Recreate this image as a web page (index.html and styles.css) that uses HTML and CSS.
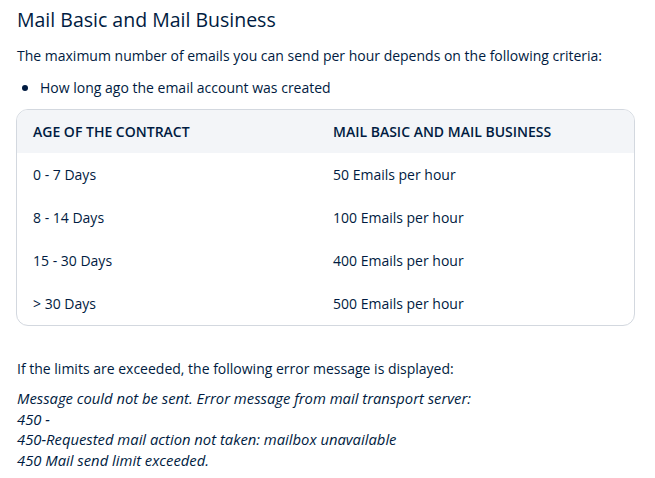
FILE: index.html
```html
<!DOCTYPE html>
<html>
<head>
<meta charset="utf-8">
<link rel="stylesheet" href="styles.css">
</head>
<body>
<div class="page">
  <h2 class="title">Mail Basic and Mail Business</h2>
  <p class="text">The maximum number of emails you can send per hour depends on the following criteria:</p>
  <ul class="list">
    <li>How long ago the email account was created</li>
  </ul>
  <div class="table-wrap">
    <table class="limits">
      <thead>
        <tr><th>AGE OF THE CONTRACT</th><th>MAIL BASIC AND MAIL BUSINESS</th></tr>
      </thead>
      <tbody>
        <tr><td>0 - 7 Days</td><td>50 Emails per hour</td></tr>
        <tr><td>8 - 14 Days</td><td>100 Emails per hour</td></tr>
        <tr><td>15 - 30 Days</td><td>400 Emails per hour</td></tr>
        <tr><td>&gt; 30 Days</td><td>500 Emails per hour</td></tr>
      </tbody>
    </table>
  </div>
  <p class="text after">If the limits are exceeded, the following error message is displayed:</p>
  <p class="error">Message could not be sent. Error message from mail transport server:<br>450 -<br>450-Requested mail action not taken: mailbox unavailable<br>450 Mail send limit exceeded.</p>
</div>
</body>
</html>
```

FILE: styles.css
```css
html, body {
  margin: 0;
  padding: 0;
  background: #ffffff;
}
body {
  font-family: "Open Sans", "Liberation Sans", sans-serif;
  color: #001b41;
}
.page {
  padding: 6px 20px 0 17px;
}
.title {
  margin: 0;
  font-size: 19.5px;
  font-weight: 500;
  line-height: 28px;
}
.text {
  margin: 11px 0 0;
  font-size: 14px;
  line-height: 22px;
}
.list {
  margin: 9px 0 0;
  padding: 0 0 0 23px;
  font-size: 14px;
  line-height: 22px;
}
.list li::marker {
  font-size: 16px;
}
.table-wrap {
  margin-top: 10px;
  border: 1px solid #d3d8df;
  border-radius: 12px;
  overflow: hidden;
  margin-left: -1px;
}
.limits {
  width: 100%;
  border-collapse: collapse;
  font-size: 14px;
}
.limits th {
  background: #f3f5f8;
  text-align: left;
  font-weight: 600;
  font-size: 14px;
  height: 43px;
  padding: 0 0 0 16px;
}
.limits td {
  height: 43px;
  padding: 0 0 0 16px;
}
.limits th:first-child, .limits td:first-child {
  width: 284px;
}
.after {
  margin-top: 32px;
}
.error {
  margin: 8px 0 0;
  font-size: 14.8px;
  font-style: italic;
  line-height: 20.6px;
}
```
